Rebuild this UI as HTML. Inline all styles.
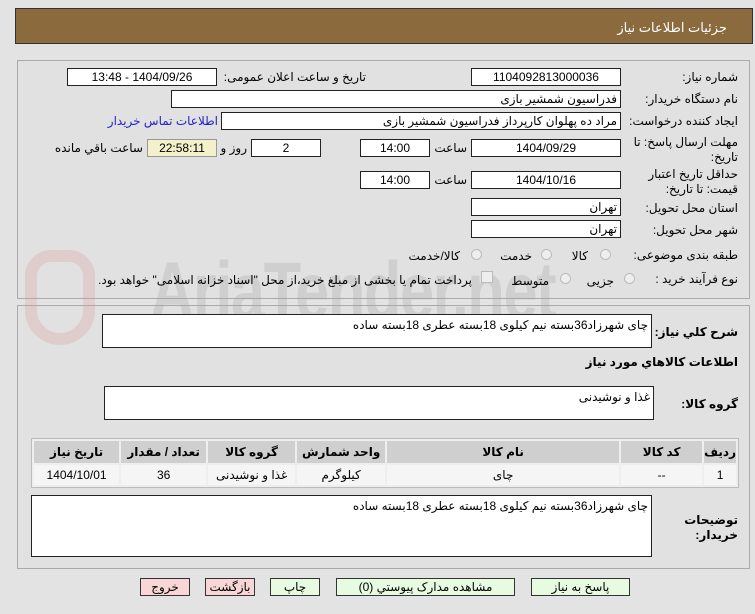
<!DOCTYPE html>
<html><head><meta charset="utf-8"><style>
*{box-sizing:border-box;margin:0;padding:0}
body{width:755px;height:614px;background:#e3e3e3;font-family:"Liberation Sans","DejaVu Sans",sans-serif;font-size:12px;color:#000;position:relative;overflow:hidden}
.a{position:absolute}
.hdr{left:15px;top:8px;width:738px;height:36px;background:#8b6a3e;border:1px solid #333}
.panel{border:1px solid #aaa;background:#e1e1e1}
.in{position:absolute;background:#fff;border:1px solid #222;height:18px;line-height:16px;text-align:center;direction:rtl;white-space:nowrap;overflow:hidden}
.r{text-align:right;padding-right:3px}
.lb{position:absolute;direction:rtl;text-align:right;white-space:nowrap;line-height:15px}
.b{font-weight:bold}
.rad{position:absolute;width:11px;height:11px;border-radius:50%;border:1px solid #bbb;background:#eee}
.ta{position:absolute;background:#fff;border:1px solid #222;direction:rtl;text-align:right;padding:3px 3px}
table{position:absolute;border-collapse:separate;border-spacing:2px;border:1px solid #bbb;background:#eee;direction:rtl}
th{background:#cfcfcf;height:22px;font-weight:bold}
td{background:#f5f5f5;height:20px;text-align:center}
.btn{position:absolute;height:18px;border:1px solid #333;text-align:center;line-height:16px;direction:rtl}
.g{background:#e6fbe0}.p{background:#f9d6d6}
</style></head><body>
<div class="a hdr"></div>
<div class="lb" style="right:28px;top:20px;color:#fff;font-size:13px">جزئیات اطلاعات نیاز</div>

<div class="a panel" style="left:17px;top:60px;width:733px;height:239px"></div>
<div class="a panel" style="left:17px;top:305px;width:733px;height:264px"></div>

<!-- watermark -->
<div class="a" style="left:25px;top:250px;width:70px;height:95px;border:12px solid rgba(220,150,150,.28);border-radius:30px 30px 40px 40px"></div>
<div class="a" style="left:150px;top:245px;font-size:82px;font-weight:bold;color:rgba(160,160,160,.28);letter-spacing:-2px;font-family:'Liberation Sans',sans-serif;transform:scaleX(.75);transform-origin:left top">AriaTender.net</div>

<div class="lb" style="right:17px;top:70px">شماره نیاز:</div>
<div class="in" style="left:471px;top:68px;width:150px">1104092813000036</div>
<div class="lb" style="right:389px;top:70px">تاریخ و ساعت اعلان عمومی:</div>
<div class="in" style="left:67px;top:68px;width:150px">1404/09/26 - 13:48</div>

<div class="lb" style="right:17px;top:92px">نام دستگاه خریدار:</div>
<div class="in r" style="left:171px;top:90px;width:450px">فدراسیون شمشیر بازی</div>

<div class="lb" style="right:17px;top:114px">ایجاد کننده درخواست:</div>
<div class="in r" style="left:221px;top:112px;width:400px">مراد ده پهلوان کارپرداز فدراسیون شمشیر بازی</div>
<div class="lb" style="right:537px;top:114px;color:#2222cc">اطلاعات تماس خریدار</div>

<div class="lb" style="right:17px;top:135px">مهلت ارسال پاسخ: تا</div>
<div class="lb" style="right:17px;top:150px">تاریخ:</div>
<div class="in" style="left:471px;top:139px;width:150px">1404/09/29</div>
<div class="lb" style="right:288px;top:141px">ساعت</div>
<div class="in" style="left:360px;top:139px;width:70px">14:00</div>
<div class="in" style="left:251px;top:139px;width:70px">2</div>
<div class="lb" style="right:508px;top:141px">روز و</div>
<div class="in" style="left:147px;top:139px;width:70px;background:#f3f0cc;border-color:#999">22:58:11</div>
<div class="lb" style="right:612px;top:141px">ساعت باقي مانده</div>

<div class="lb" style="right:17px;top:167px">حداقل تاریخ اعتبار</div>
<div class="lb" style="right:17px;top:182px">قیمت: تا تاریخ:</div>
<div class="in" style="left:471px;top:171px;width:150px">1404/10/16</div>
<div class="lb" style="right:288px;top:173px">ساعت</div>
<div class="in" style="left:360px;top:171px;width:70px">14:00</div>

<div class="lb" style="right:17px;top:201px">استان محل تحویل:</div>
<div class="in r" style="left:471px;top:198px;width:150px">تهران</div>
<div class="lb" style="right:17px;top:223px">شهر محل تحویل:</div>
<div class="in r" style="left:471px;top:220px;width:150px">تهران</div>

<div class="lb" style="right:17px;top:248px">طبقه بندی موضوعی:</div>
<div class="rad" style="left:600px;top:249px"></div>
<div class="lb" style="right:167px;top:249px">کالا</div>
<div class="rad" style="left:541px;top:249px"></div>
<div class="lb" style="right:223px;top:249px">خدمت</div>
<div class="rad" style="left:471px;top:249px"></div>
<div class="lb" style="right:295px;top:249px">کالا/خدمت</div>

<div class="lb" style="right:17px;top:272px">نوع فرآیند خرید :</div>
<div class="rad" style="left:624px;top:273px"></div>
<div class="lb" style="right:141px;top:274px">جزیی</div>
<div class="rad" style="left:560px;top:273px"></div>
<div class="lb" style="right:206px;top:274px">متوسط</div>
<div class="a" style="left:481px;top:271px;width:12px;height:12px;border:1px solid #bbb;background:#eee"></div>
<div class="lb" style="right:283px;top:273px">پرداخت تمام یا بخشی از مبلغ خرید،از محل "اسناد خزانه اسلامی" خواهد بود.</div>

<div class="lb b" style="right:17px;top:325px">شرح کلي نیاز:</div>
<div class="ta" style="left:102px;top:314px;width:550px;height:34px">چای شهرزاد36بسته نیم کیلوی 18بسته عطری 18بسته ساده</div>
<div class="lb b" style="right:17px;top:355px">اطلاعات کالاهاي مورد نیاز</div>
<div class="lb b" style="right:17px;top:397px">گروه کالا:</div>
<div class="ta" style="left:104px;top:386px;width:550px;height:34px">غذا و نوشیدنی</div>

<table style="left:31px;top:438px;width:708px">
<tr><th style="width:26px">ردیف</th><th style="width:81px">کد کالا</th><th style="width:232px">نام کالا</th><th style="width:88px">واحد شمارش</th><th style="width:87px">گروه کالا</th><th style="width:85px">تعداد / مقدار</th><th>تاریخ نیاز</th></tr>
<tr><td>1</td><td>--</td><td>چای</td><td>کیلوگرم</td><td>غذا و نوشیدنی</td><td>36</td><td>1404/10/01</td></tr>
</table>

<div class="lb b" style="right:17px;top:513px">توضیحات</div>
<div class="lb b" style="right:17px;top:528px">خریدار:</div>
<div class="ta" style="left:31px;top:495px;width:621px;height:62px">چای شهرزاد36بسته نیم کیلوی 18بسته عطری 18بسته ساده</div>

<div class="btn g" style="left:531px;top:578px;width:99px">پاسخ به نیاز</div>
<div class="btn g" style="left:336px;top:578px;width:179px">مشاهده مدارک پیوستي (0)</div>
<div class="btn g" style="left:270px;top:578px;width:50px">چاپ</div>
<div class="btn p" style="left:205px;top:578px;width:50px">بازگشت</div>
<div class="btn p" style="left:140px;top:578px;width:50px">خروج</div>
</body></html>
